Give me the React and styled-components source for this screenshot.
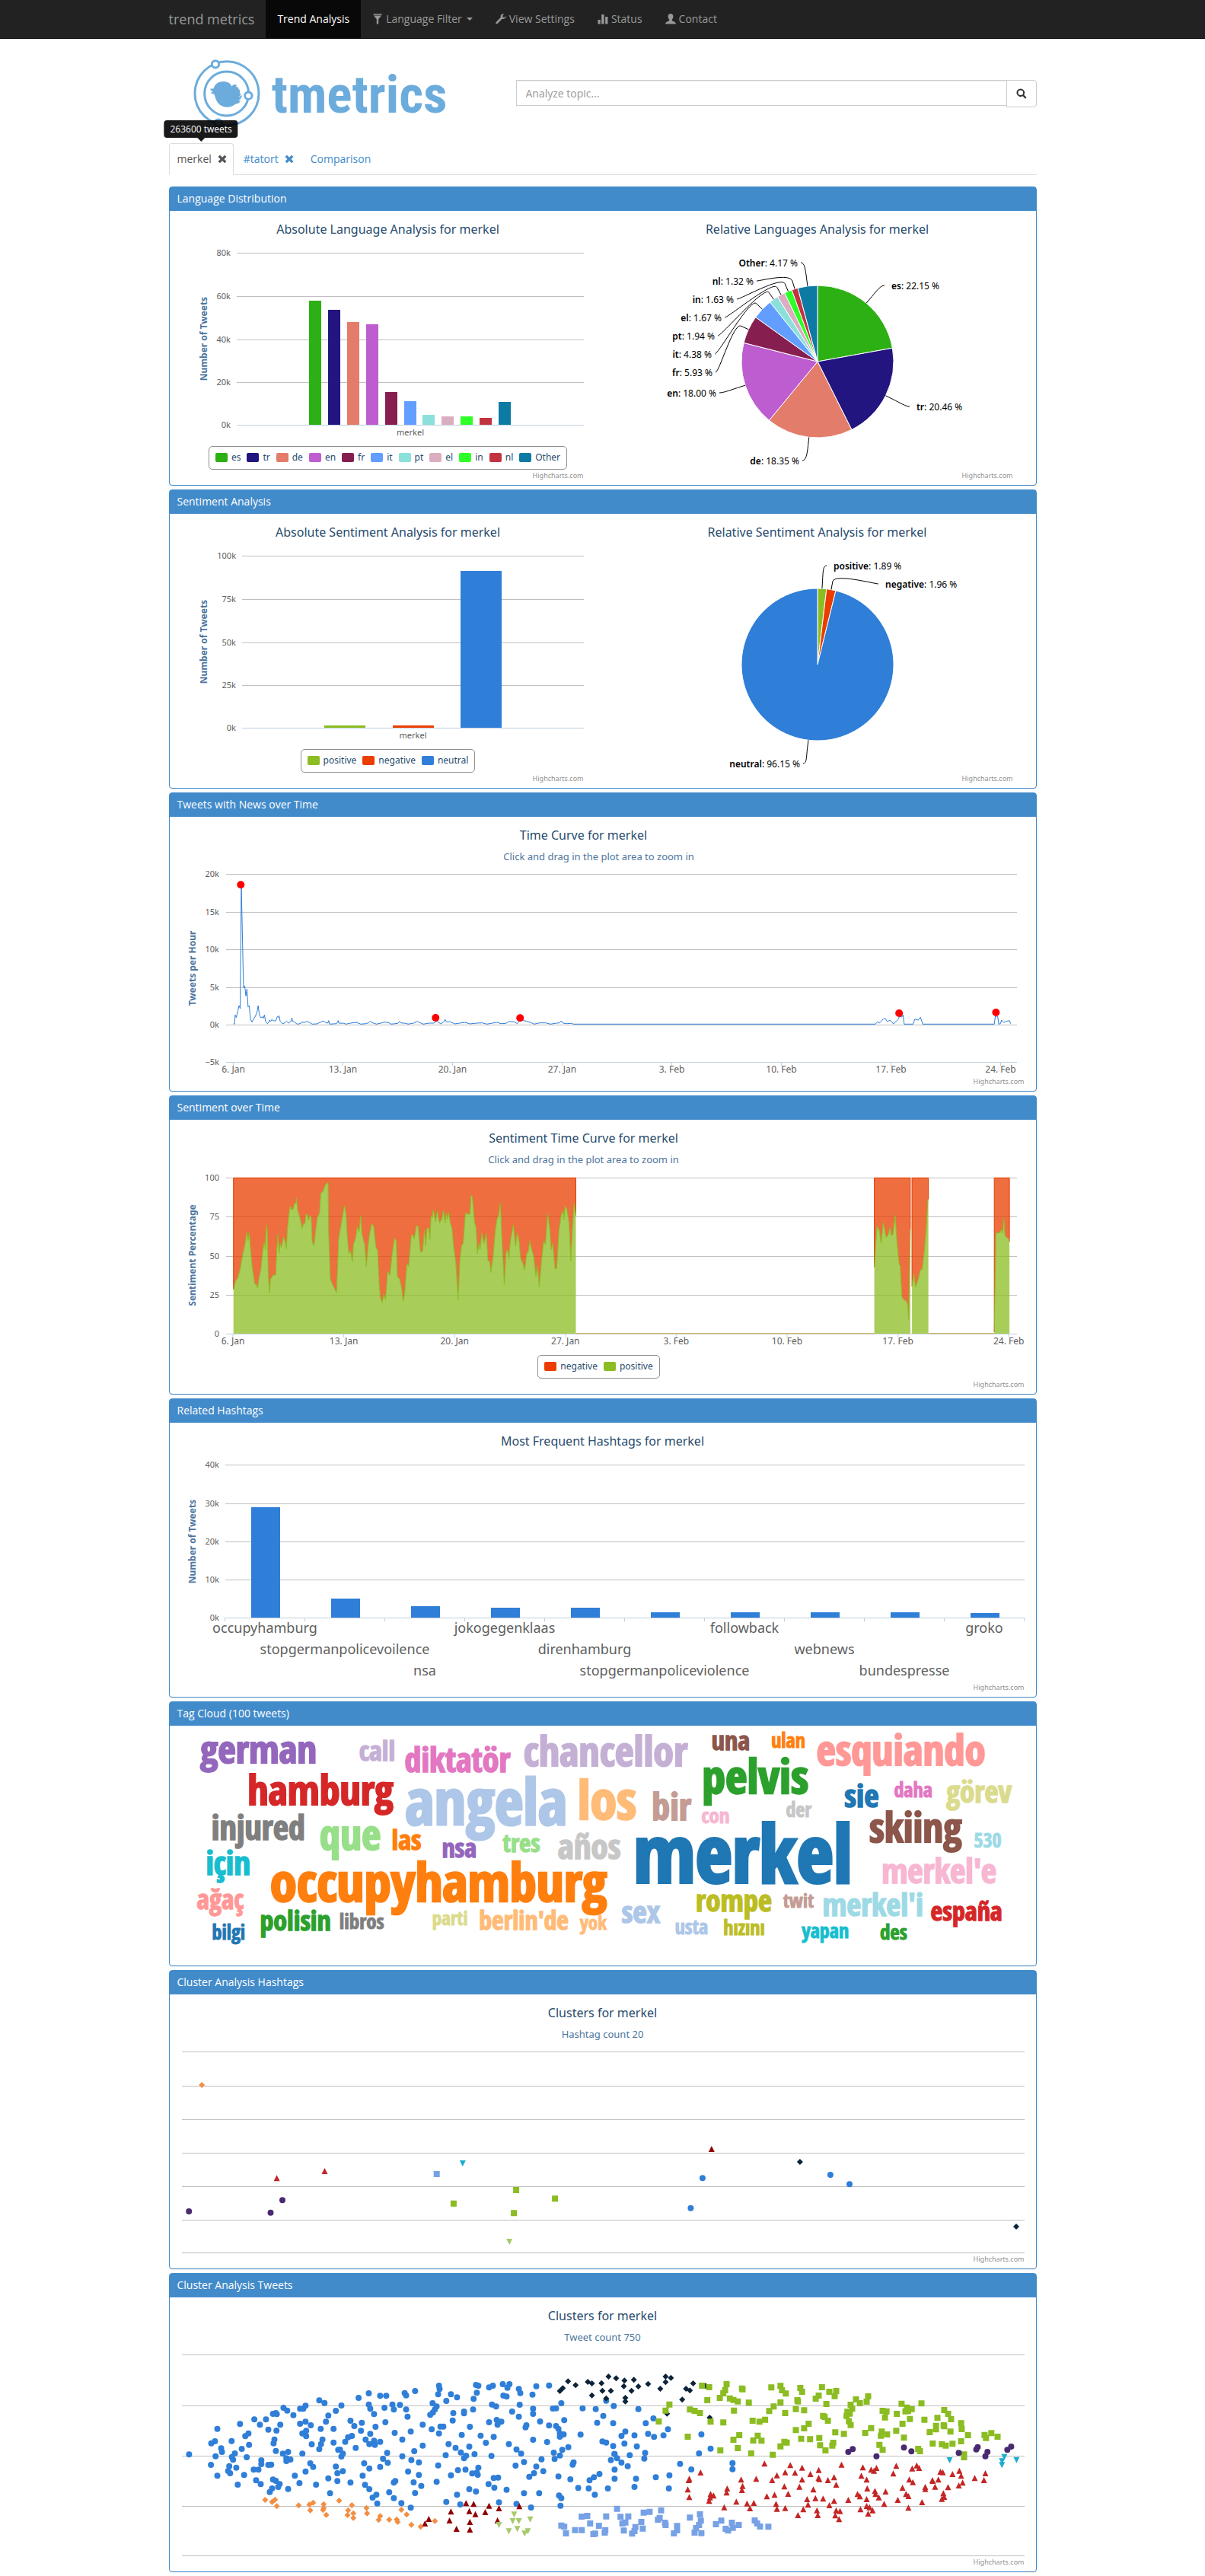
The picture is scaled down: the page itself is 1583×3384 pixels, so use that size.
import React from "react";
import styled, { createGlobalStyle, css } from "styled-components";

/* ---------- theme values ---------- */

const uiFont = `"Open Sans", "Noto Sans", sans-serif`;
const chartFont = `"Noto Sans", "Open Sans", sans-serif`;
const primary = "#428bca";
const logoBlue = "#6cacdc";
const grid = "#c0c0c0";
const axis = "#c0d0e0";

const GlobalStyle = createGlobalStyle`
  * { box-sizing: border-box; }
  body {
    margin: 0;
    background: #fff;
    color: #333;
    font: 14px/20px ${uiFont};
  }
  a { text-decoration: none; }
`;

const Container = styled.div`
  max-width: 1170px;
  margin: 0 auto;
  padding: 0 15px;
`;

/* ---------- navigation bar ---------- */

const Navbar = styled.header`
  background: #222;
  border-bottom: 1px solid #080808;
`;

const NavInner = styled.nav`
  display: flex;
  align-items: stretch;
  min-height: 50px;
`;

const Brand = styled.a`
  padding: 15px 15px 15px 0;
  font-size: 18px;
  line-height: 20px;
  color: #999;
`;

const NavItem = styled.a`
  display: flex;
  align-items: center;
  gap: 4px;
  padding: 15px;
  border: 0;
  background: ${(p) => (p.$active ? "#080808" : "transparent")};
  color: ${(p) => (p.$active ? "#fff" : "#999")};
  font: 14px/20px ${uiFont};
  cursor: pointer;
`;

const Caret = styled.span`
  margin-left: 2px;
  border: 4px solid transparent;
  border-top-color: currentColor;
  border-bottom: 0;
`;

/* ---------- page header ---------- */

const PageHead = styled.div`
  display: grid;
  grid-template-columns: 2fr 3fr;
  height: 137px;
`;

const LogoLink = styled.a`
  padding: 25px 0 0 30px;
`;

const LogoDrawing = styled.svg`
  display: block;
  width: 340px;
  max-width: 100%;
  font-family: "Roboto Condensed", "Open Sans Condensed", sans-serif;
`;

const SearchForm = styled.form`
  display: flex;
  align-items: flex-start;
  padding-top: 54px;
`;

const SearchInput = styled.input`
  flex: 1;
  min-width: 0;
  height: 34px;
  padding: 6px 12px;
  border: 1px solid #ccc;
  border-radius: 0;
  box-shadow: inset 0 1px 1px rgba(0, 0, 0, 0.08);
  font: 14px/20px ${uiFont};
  color: #555;
  &::placeholder { color: #999; opacity: 1; }
`;

const SearchButton = styled.button`
  display: flex;
  align-items: center;
  justify-content: center;
  width: 40px;
  height: 36px;
  margin-left: -1px;
  padding: 0;
  border: 1px solid #ccc;
  border-radius: 0 4px 4px 0;
  background: #fff;
  color: #333;
`;

/* ---------- topic tabs ---------- */

const Tabs = styled.ul`
  display: flex;
  gap: 2px;
  margin: 0 0 15px;
  padding: 0;
  list-style: none;
  border-bottom: 1px solid #ddd;
`;

const Tab = styled.li`
  position: relative;
  display: flex;
  align-items: center;
  gap: 8px;
  height: 42px;
  margin-bottom: -1px;
  padding: 0 8px 0 10px;
  border: 1px solid transparent;
  border-radius: 4px 4px 0 0;
  color: ${primary};
  ${(p) =>
    p.$active &&
    css`
      color: #555;
      background: #fff;
      border-color: #ddd #ddd #fff;
    `}
`;

const TabLink = styled.a`
  color: inherit;
`;

const CloseButton = styled.button`
  display: flex;
  padding: 0;
  border: 0;
  background: none;
  color: inherit;
`;

const Tooltip = styled.span`
  position: absolute;
  left: 50%;
  bottom: 100%;
  transform: translateX(-50%);
  margin-bottom: 8px;
  padding: 3px 8px;
  border-radius: 4px;
  background: rgba(0, 0, 0, 0.9);
  color: #fff;
  font-size: 12px;
  line-height: 17px;
  white-space: nowrap;
  &::after {
    content: "";
    position: absolute;
    left: 50%;
    top: 100%;
    margin-left: -5px;
    border: 5px solid transparent;
    border-top-color: rgba(0, 0, 0, 0.9);
    border-bottom: 0;
  }
`;

/* ---------- panels and chart parts ---------- */

const PanelBox = styled.section`
  margin-bottom: 5px;
  border: 1px solid ${primary};
  border-radius: 4px;
  box-shadow: 0 1px 1px rgba(0, 0, 0, 0.05);
  background: #fff;
`;

const PanelHeading = styled.h2`
  margin: 0;
  padding: 5px 10px 6px;
  background: ${primary};
  color: #fff;
  font-size: 14px;
  font-weight: 400;
  line-height: 20px;
`;

const PanelBody = styled.div`
  padding: 5px;
`;

const Columns = styled.div`
  display: grid;
  grid-template-columns: 1fr 1fr;
  gap: 30px;
  padding: 0 15px;
`;

const ChartBox = styled.figure`
  display: flex;
  flex-direction: column;
  min-height: 350px;
  margin: 0;
  font-family: ${chartFont};
`;

const ChartTitle = styled.h3`
  margin: 0;
  padding: 9px ${(p) => (p.$shift ? "50px" : "0")} 9px 0;
  color: #274b6d;
  font-size: 16px;
  font-weight: 400;
  line-height: 20px;
  text-align: center;
`;

const ChartSubtitle = styled.p`
  margin: 0;
  padding-right: ${(p) => p.$shift || 0}px;
  color: #4d759e;
  font-size: 13px;
  line-height: 18px;
  text-align: center;
`;

const Plot = styled.svg`
  display: block;
  width: 100%;
  font-family: ${chartFont};
  font-size: 11px;
`;

const LegendList = styled.ul`
  display: flex;
  flex-wrap: wrap;
  align-self: center;
  gap: 8px;
  margin: 4px ${(p) => (p.$shift ? "10px" : "0")} 0 0;
  padding: 6px 8px 8px;
  border: 1px solid #909090;
  border-radius: 5px;
  list-style: none;
  color: #274b6d;
  font-size: 12px;
  line-height: 15px;
`;

const LegendItem = styled.li`
  display: flex;
  align-items: center;
  gap: 5px;
`;

const Swatch = styled.span`
  width: 16px;
  height: 12px;
  border-radius: 2px;
  background: ${(p) => p.$color};
`;

const Credits = styled.a`
  margin-top: auto;
  padding-right: 10px;
  color: #909090;
  font-size: 9px;
  line-height: 15px;
  text-align: right;
`;

const Cloud = styled.svg`
  display: block;
  width: 100%;
  font-family: "Open Sans Condensed", "Roboto Condensed", sans-serif;
  font-weight: 800;
`;

/* ---------- icons ---------- */

const Icon = ({ size = 14, children }) => (
  <svg width={size} height={size} viewBox="0 0 14 14" fill="currentColor" aria-hidden="true">
    {children}
  </svg>
);
const FilterIcon = () => (
  <Icon><path d="M1.5 0h11v1.4h-11zM2 2.4h10L8.2 7.2V13l-2.4.9V7.2z" /></Icon>
);
const WrenchIcon = () => (
  <Icon><path d="M13.8 3.2 11.6 5 9.6 4.4 9.2 2.6 11.2.4C9.2-.3 6.900.7 6.600 3c-.1.700 0 1.200.2 1.800L.6 11.200c-.6.6-.5 1.400 0 1.900.6.6 1.500.6 2 0l6.100-6.400c2.800.8 5.400-.9 5.100-3.500z" /></Icon>
);
const StatsIcon = () => (
  <Icon><path d="M.5 8h3.200v5.500H.5zM5.200 1h3.400v12.500H5.200zM10.200 4h3.200v9.500h-3.200z" /></Icon>
);
const UserIcon = () => (
  <Icon><path d="M7 0c2.200 0 3.400 1.500 3.400 3.600 0 1.900-.8 3.300-1.700 4.100v1.200c.5.900 5.300 1.700 5.300 4.300v.300H0v-.3c0-2.600 4.800-3.400 5.300-4.300V7.700C4.400 6.900 3.600 5.500 3.600 3.600 3.600 1.500 4.800 0 7 0z" /></Icon>
);
const RemoveIcon = () => (
  <Icon size={12}><path d="M3.400 1 7 4.500 10.600 1 13.400 3.600 9.900 7l3.500 3.500-2.800 2.700L7 9.700l-3.600 3.500L.6 10.500 4.100 7 .6 3.600z" /></Icon>
);
const SearchIcon = () => (
  <Icon><path fillRule="evenodd" d="M5.800.5a5.300 5.300 0 0 1 4.400 8.200l3.400 3.300-1.700 1.700-3.300-3.400A5.300 5.300 0 1 1 5.800.5zm0 2a3.300 3.300 0 1 0 0 6.600 3.300 3.300 0 0 0 0-6.600z" /></Icon>
);

const Logo = () => (
  <LogoDrawing viewBox="108 30 1020 276" role="img" aria-label="tmetrics">
    <g fill="none" stroke={logoBlue} strokeWidth="9">
      <circle cx="246" cy="170" r="126" />
      <circle cx="245" cy="171" r="87" />
      <g fill="#fff">
        <circle cx="201" cy="55" r="14" />
        <circle cx="331" cy="179" r="14" />
        <circle cx="212" cy="287" r="14" />
      </g>
    </g>
    <path
      fill={logoBlue}
      d="M180 152l14-1c5-19 20-28 40-28 17 1 27 9 32 20 3-9 14-11 19-4-1 2-2 4-3 6 7-2 12 3 10 9 7 3 8 8 4 14 5 2 6 6 4 10l-9 5c5 0 10-2 15-6-1 10-7 18-15 21 4 1 7 1 10 0-3 8-11 13-21 14-10 9-24 13-38 12-25-3-38-20-43-43-2-6-4-9-8-10-4 0-7-1-9-3 3-2 7-3 10-5-5-1-9-4-12-11z"
    />
    <text x="422" y="245" fontSize="208" fontWeight="700" fill={logoBlue}>tmetrics</text>
  </LogoDrawing>
);

/* ---------- generic chart drawing ---------- */

const GridLines = ({ ys, x1, x2, base }) => (
  <g>
    {ys.map((y) => (
      <line key={y} x1={x1} x2={x2} y1={y} y2={y} stroke={y === base ? axis : grid} />
    ))}
  </g>
);

const YLabels = ({ ys, labels, x }) => (
  <g fill="#606060" textAnchor="end">
    {labels.map((t, i) => (
      <text key={t} x={x} y={ys[i] + 3}>{t}</text>
    ))}
  </g>
);

const AxisTitle = ({ y, children }) => (
  <text
    transform={`translate(29 ${y}) rotate(-90)`}
    textAnchor="middle"
    fontSize="12"
    fontWeight="700"
    fill="#4d759e"
  >
    {children}
  </text>
);

const DateAxis = ({ ticks, y }) => (
  <g>
    {ticks.map(([x, label]) => (
      <g key={label}>
        <line x1={x} x2={x} y1={y} y2={y + 5} stroke={axis} />
        <text x={x} y={y + 14} textAnchor="middle" fill="#606060" fontSize="12">{label}</text>
      </g>
    ))}
  </g>
);

const Legend = ({ items, shift }) => (
  <LegendList $shift={shift}>
    {items.map(([name, color]) => (
      <LegendItem key={name}>
        <Swatch $color={color} />
        {name}
      </LegendItem>
    ))}
  </LegendList>
);

const Chart = ({ title, subtitle, shift, subShift, legend, children }) => (
  <ChartBox>
    <ChartTitle $shift={shift}>{title}</ChartTitle>
    {subtitle && <ChartSubtitle $shift={subShift}>{subtitle}</ChartSubtitle>}
    {children}
    {legend && <Legend items={legend} shift={shift} />}
    <Credits href="#">Highcharts.com</Credits>
  </ChartBox>
);

/* Column chart used by the two half-width panels. */
const columnYs = [50.5, 107.5, 164.5, 220.5, 276.5];

const ColumnPlot = ({ labels, left, bars }) => (
  <Plot viewBox="0 38 534 262">
    <GridLines ys={columnYs} x1={left} x2={524} base={276.5} />
    <YLabels ys={columnYs} labels={labels} x={left - 8} />
    <AxisTitle y={163}>Number of Tweets</AxisTitle>
    {bars.map(([x, y, w, color]) => (
      <rect key={x} x={x} y={y} width={w} height={276 - y} fill={color} />
    ))}
    <text x={(left + 524) / 2} y="290" textAnchor="middle" fill="#606060">merkel</text>
  </Plot>
);

/* Pie with soft connectors that bend out of the slice towards the label. */
const PiePlot = ({ slices }) => {
  const cx = 267, cy = 193, r = 100;
  const total = slices.reduce((s, d) => s + d.value, 0);
  let turn = 0;
  const at = (a, dist) => [cx + Math.sin(a) * dist, cy - Math.cos(a) * dist];
  return (
    <Plot viewBox="0 38 534 295">
      {slices.map(({ name, value, color, anchor }) => {
        const a0 = (turn / total) * 2 * Math.PI;
        const a1 = ((turn + value) / total) * 2 * Math.PI;
        turn += value;
        const mid = (a0 + a1) / 2;
        const rightSide = mid < Math.PI && name !== "neutral";
        const [ax, ay] = anchor;
        const side = rightSide ? -5 : 5;
        return (
          <g key={name}>
            <path
              d={`M${cx} ${cy}L${at(a0, r)}A${r} ${r} 0 ${a1 - a0 > Math.PI ? 1 : 0} 1 ${at(a1, r)}Z`}
              fill={color}
              stroke="#fff"
            />
            <path
              d={`M${ax} ${ay}C${ax + side} ${ay} ${at(mid, r + 22)} ${at(mid, r + 11)}L${at(mid, r)}`}
              fill="none"
              stroke="#000"
            />
            <text
              x={rightSide ? ax + 9 : ax - 4}
              y={ay + 5}
              fontSize="12"
              textAnchor={rightSide ? "start" : "end"}
            >
              <tspan fontWeight="600">{name}</tspan>: {value.toFixed(2)} %
            </text>
          </g>
        );
      })}
    </Plot>
  );
};

/* ---------- data ---------- */

const languages = [
  ["es", "#2cb014", 22.15, 113, [355, 93]],
  ["tr", "#231580", 20.46, 125, [388, 252]],
  ["de", "#e37c6a", 18.35, 141, [247, 323]],
  ["en", "#bd5dd0", 18.0, 144, [138, 234]],
  ["fr", "#861f4f", 5.93, 233, [133, 207]],
  ["it", "#629eff", 4.38, 245, [132, 183]],
  ["pt", "#8be0db", 1.94, 263, [136, 159]],
  ["el", "#dbadc0", 1.67, 265, [145, 135]],
  ["in", "#2dff27", 1.63, 265, [161, 111]],
  ["nl", "#c23340", 1.32, 267, [187, 87]],
  ["Other", "#0d7aa4", 4.17, 246, [245, 63]],
];
const languageBars = languages.map(([, c, , y], i) => [163 + Math.round(i * 24.9), y, 16, c]);

const sentiments = [
  { name: "positive", value: 1.89, color: "#8bbc21", anchor: [279, 63] },
  { name: "negative", value: 1.96, color: "#eb3d00", anchor: [347, 87] },
  { name: "neutral", value: 96.15, color: "#2f7ed8", anchor: [248, 323] },
];

/* Wide charts keep their samples on a 1568-unit horizontal and a 3x vertical scale. */
const wideX = (u) => u / 1.3517 - 17.5;
const parse = (s) => s.trim().split(/\s+/).map((p) => p.split(",").map(Number));
const toPath = (pts, dy) =>
  pts.map(([u, v], i) => `${i ? "L" : "M"}${wideX(u).toFixed(1)} ${(v / 3 - dy).toFixed(1)}`).join("");

const tweetCurve = parse(`130,915 132,915 133,880 135,890 138,862 140,843 142,855 144,367 147,690 148,772 150,765 152,805
154,778 156,848 158,843 160,895 163,908 166,895 169,885 172,868 174,843 176,880 179,891 182,887 183,893 185,880 187,905
190,914 193,908 194,900 196,906 198,898 201,903 205,903 208,886 210,890 211,883 213,905 217,914 221,911 224,904 228,912
232,905 234,892 235,906 238,907 243,916 248,914 252,908 256,910 259,906 264,908 270,916 278,915 283,910 287,906 291,904
294,911 298,911 299,902 301,916 313,914 316,902 317,912 326,913 330,916 338,912 348,909 356,916 365,914 370,911 373,904
376,910 384,916 392,912 398,908 405,910 410,916 422,913 425,905 427,911 436,913 440,916 450,912 456,905 460,909 467,916
478,912 486,912 490,905 494,908 498,915 503,908 506,898 508,907 515,907 523,915 532,912 541,909 550,915 562,912 572,911
580,916 590,912 598,909 605,914 614,913 619,906 628,907 634,914 640,898 644,902 650,904 658,910 664,916 674,911 684,911
693,916 704,912 709,911 712,903 715,912 722,914 730,913 734,916 1270,916 1274,906 1277,912 1280,905 1284,896 1288,895
1291,906 1296,900 1302,915 1307,905 1310,898 1313,885 1317,888 1319,880 1321,916 1337,916 1340,896 1346,900 1350,889
1354,916 1481,916 1483,885 1487,885 1489,916 1492,914 1494,900 1498,910 1502,905 1508,902 1510,914`);

const newsMarkers = parse("143,367 489,891 639,892 1312,873 1484,870");

const positiveRuns = [
  `130,792 134,758 138,745 142,710 146,660 150,620 154,565 156,600 158,568 161,650 164,715 168,772 170,770 173,786 175,750
179,710 182,640 185,605 187,635 188,537 190,560 192,740 194,806 196,750 201,735 205,735 207,640 209,574 211,650 213,610
215,625 219,585 222,605 224,632 226,550 229,490 231,462 233,478 236,475 239,450 241,455 242,430 244,480 248,510 252,550
255,530 257,535 259,495 261,495 263,520 266,500 268,510 270,605 273,620 276,560 279,510 283,490 285,415 289,405 293,382
296,372 298,370 299,560 302,750 305,768 309,785 313,805 317,590 321,540 325,490 327,460 330,495 332,580 335,650 338,640
341,684 343,615 347,590 350,545 353,565 356,500 358,570 360,590 363,615 366,700 369,620 372,570 376,532 379,545 383,625
386,640 389,780 391,825 394,845 397,810 400,832 404,720 408,735 412,650 416,590 419,600 421,740 425,750 429,790 431,838
434,810 438,690 441,700 446,575 449,580 451,592 455,540 458,545 462,645 466,640 469,555 471,620 474,550 477,550 479,595
481,500 483,510 485,477 489,525 492,482 496,530 500,515 503,480 506,530 508,490 510,515 512,487 515,530 518,550 521,620
525,690 529,832 532,680 535,620 538,610 542,490 546,495 550,495 552,420 554,425 558,525 561,550 563,650 566,610 568,635
571,570 575,612 579,570 582,680 585,680 587,725 591,665 595,560 598,515 601,500 604,450 607,610 611,772 614,650 617,635
619,670 622,600 627,537 631,620 634,570 637,600 640,670 644,690 647,716 651,650 654,640 656,600 659,630 663,660 667,740
670,700 673,782 677,680 681,600 684,615 688,493 692,560 694,635 697,610 701,710 704,710 708,560 712,500 715,480 717,515
719,463 722,475 726,530 729,680 732,550 735,450 738,500`,
  `1268,705 1271,600 1273,540 1277,560 1280,610 1284,527 1289,587 1293,575 1296,545 1298,580 1301,575 1305,500 1308,600
1312,690 1314,700 1317,820 1321,835 1324,835 1327,850 1329,910 1332,555`,
  `1335,780 1338,730 1341,782 1345,760 1350,715 1353,712 1357,640 1361,530 1363,437 1364,437`,
  `1481,960 1484,570 1491,568 1494,555 1496,570 1498,509 1500,580 1503,588 1506,590 1508,603`,
].map(parse);

const hashtags = [
  ["occupyhamburg", 106], ["stopgermanpolicevoilence", 226], ["nsa", 236], ["jokogegenklaas", 238],
  ["direnhamburg", 238], ["stopgermanpoliceviolence", 244], ["followback", 244], ["webnews", 244],
  ["bundespresse", 244], ["groko", 245],
];

const cloudWords = [
  ["german", 71, 258, 51, "#9467bd"], ["call", 353, 248, 36, "#c5b0d5"], ["diktatör", 434, 293, 44, "#e377c2"],
  ["chancellor", 645, 270, 54, "#c5b0d5"], ["una", 979, 207, 34, "#8c564b"], ["ulan", 1085, 198, 26, "#ff7f0e"],
  ["esquiando", 1165, 267, 55, "#ff9896"], ["hamburg", 155, 423, 54, "#d62728"], ["angela", 435, 502, 82, "#aec7e8"],
  ["los", 741, 480, 70, "#ffbb78"], ["bir", 873, 482, 48, "#c49c94"], ["pelvis", 962, 377, 62, "#2ca02c"],
  ["sie", 1215, 433, 42, "#1f77b4"], ["daha", 1303, 392, 26, "#e377c2"], ["görev", 1396, 413, 39, "#dbdb8d"],
  ["con", 961, 494, 27, "#f7b6d2"], ["der", 1111, 470, 26, "#c7c7c7"], ["injured", 91, 561, 44, "#7f7f7f"],
  ["que", 283, 601, 55, "#98df8a"], ["las", 411, 600, 36, "#ff7f0e"], ["nsa", 500, 629, 34, "#9467bd"],
  ["tres", 608, 608, 33, "#98df8a"], ["años", 706, 635, 45, "#c7c7c7"], ["merkel", 840, 730, 105, "#1f77b4"],
  ["skiing", 1259, 570, 53, "#8c564b"], ["530", 1445, 591, 26, "#9edae5"], ["için", 81, 699, 43, "#17becf"],
  ["occupyhamburg", 195, 804, 71, "#ff7f0e"], ["merkel'e", 1281, 731, 44, "#f7b6d2"], ["ağaç", 65, 834, 35, "#ff9896"],
  ["rompe", 951, 842, 39, "#bcbd22"], ["twit", 1106, 828, 25, "#c49c94"], ["merkel'i", 1176, 861, 41, "#9edae5"],
  ["españa", 1368, 878, 34, "#d62728"], ["polisin", 177, 918, 36, "#2ca02c"], ["libros", 318, 911, 27, "#7f7f7f"],
  ["parti", 483, 897, 25, "#dbdb8d"], ["berlin'de", 566, 916, 34, "#ffbb78"], ["yok", 745, 914, 25, "#ffbb78"],
  ["sex", 819, 887, 40, "#aec7e8"], ["usta", 914, 933, 26, "#aec7e8"], ["hızını", 1000, 936, 26, "#bcbd22"],
  ["yapan", 1139, 948, 26, "#17becf"], ["des", 1278, 953, 27, "#2ca02c"], ["bilgi", 92, 953, 26, "#1f77b4"],
];

const series = {
  blue: ["circle", "#2f7ed8"],
  navy: ["diamond", "#0d233a"],
  green: ["square", "#8bbc21"],
  maroon: ["up", "#910000"],
  cyan: ["down", "#1aadce"],
  purple: ["circle", "#492970"],
  orange: ["diamond", "#f28f43"],
  sky: ["square", "#77a1e5"],
  red: ["up", "#c42525"],
  lime: ["down", "#a6c96a"],
};

const hashtagClusters = {
  blue: "963,844 942,962 1190,831 1224,868",
  navy: "1136,780 1520,1035",
  green: "632,891 521,944 701,925 628,982",
  maroon: "979,729",
  cyan: "537,786",
  purple: "51,975 196,980 217,931",
  orange: "74,477",
  sky: "491,828",
  red: "207,844 292,816",
  lime: "620,1095",
};

/* Tweet clusters, western part of the map. */
const tweetsWest = {
  blue: `99,733 174,774 196,632 188,681 175,689 190,740 196,817 209,709 212,723 245,680 256,729 246,743 250,754 237,779
261,785 233,798 240,807 274,613 323,595 303,650 292,661 305,695 280,711 297,744 266,852 288,814 342,616 363,595 321,793
337,793 347,756 347,771 371,774 381,773 329,835 345,850 371,635 399,639 412,616 387,573 397,570 400,574 423,549 436,560
457,578 392,674 389,689 397,719 421,730 439,723 433,748 433,759 447,753 387,832 397,837 410,850 405,861 384,867 376,881
439,869 462,817 478,846 480,553 491,553 499,541 480,612 499,604 517,618 501,640 488,650 501,661 520,693 488,730 515,768
525,782 499,800 535,852 546,520 564,530 577,580 569,604 551,632 557,674 552,692 546,712 577,827 583,886 622,540 603,561
595,632 595,686 611,715 617,714 627,730 622,741 603,781 608,807 627,799 608,838 653,600 666,621 645,665 658,660 635,683
671,707 653,844 681,510 716,492 755,502 776,502 716,536 721,553 734,574 692,608 739,624 689,640 721,652 705,674 734,679
718,692 737,695 755,683 700,768 718,788 695,817 703,853 718,870 742,892 729,903 745,926 779,727 765,750 781,766 755,782
786,882 802,905 828,925 860,943 770,549 797,536 802,556 823,538 844,556 849,584 773,606 805,648 831,674 831,740 862,755
888,764 872,720 851,800 888,814 870,843 896,857 807,838 802,844 875,885 839,491 844,500 875,483 860,643 901,616 901,698
957,462 959,475 954,496 998,496 1019,508 982,522 935,531 949,544 943,556 936,568 927,577 1006,570 1004,599 962,623
972,623 932,634 957,650 990,692 1014,707 980,736 954,776 1022,795 998,815 949,841 1019,892 982,920 1030,930 1084,459
1092,462 1087,490 1076,514 1129,469 1142,462 1176,456 1199,456 1192,470 1178,501 1189,505 1231,475 1236,491 1291,464
1278,497 1335,461 1074,556 1043,564 1043,571 1063,624 1035,656 1100,659 1139,536 1153,544 1208,564 1234,537 1280,553
1280,573 1231,584 1129,606 1155,597 1171,604 1158,616 1257,618 1254,626 1304,603 1335,619 1359,621 1145,664 1118,687
1061,702 1032,725 1050,738 1043,748 1079,732 1137,739 1197,692 1223,713 1239,730 1280,675 1328,684 1092,785 1048,793
1071,808 1087,805 1090,813 1145,826 1160,824 1127,850 1147,864 1061,870 1084,879 1189,872 1220,777 1249,763 1309,752
1291,781 1283,807 1315,799 1267,821 1249,886 1301,886 1163,922 1223,928 1273,942 1377,531 1348,552 1359,551 1387,598
1367,632 1372,650 1385,654 1372,663 1443,655 1401,704 1380,715 1351,726 1372,737 1354,751 1419,764 1416,773 1367,820
1408,831 1369,895 1377,905 1374,935 1435,865 1450,551 1495,554 1531,521 1557,542 1521,581 1500,608 1555,610 1518,682
1531,686 1555,700 1559,731 1547,755 1560,793 1560,829 1508,810 1489,823 1474,835 1471,867 1492,892 1537,867`,
  navy: `1372,483 1382,472 1400,445 1426,460 1468,447 1482,453 1515,452 1539,426 1518,482 1547,482 1482,500 1531,512 1565,433`,
  maroon: `909,1005 922,987 998,958 993,993 1017,1026 1050,925 1076,928 1061,956 1082,968 1063,999 1063,1029 1129,935
1116,960 1163,945 1158,993 1233,937`,
  orange: `360,912 384,920 394,911 400,937 475,934 512,931 525,923 515,953 561,929 561,944 559,952 570,971 614,915 658,933
645,953 663,965 643,972 663,983 708,944 710,965 755,976 750,991 786,990 812,989 815,999 828,951 846,970 862,1010 894,1018
943,995`,
  lime: `1215,970 1210,996 1231,996 1270,989 1163,1011 1226,1027 1197,1036 1262,1036 1251,1045`,
  sky: `1377,1013 1387,1018 1393,1044 1424,1031 1447,1031 1447,978 1466,975 1476,1005 1506,1014 1531,977 1528,1031
1526,1041 1487,1047 1493,1045`,
};

/* Tweet clusters, eastern part of the map. */
const tweetsEast = {
  blue: `175,554 131,643 118,660 162,658 128,690 170,701 146,736 95,731 103,748 118,765 139,779 198,727 195,749 167,829
162,861 200,610 226,591 208,652 228,664 260,658 275,634 234,823 280,815 278,867 316,770 354,792 380,729 388,654 419,710
493,767 493,791`,
  navy: `128,442 160,439 126,464 152,482 175,465 131,510 131,524 208,455 249,474 267,426 285,431 267,448 323,517 336,474
349,481 360,453 402,463 272,572 416,588`,
  purple: `884,723 899,712 979,740 1072,706 1097,721 1257,727 1321,704 1316,713 1354,723 1347,740 1421,715 1434,702`,
  green: `390,462 414,468 473,456 468,480 462,492 450,510 408,519 280,536 267,560 244,603 349,556 365,561 383,570 419,604
462,607 342,663 484,512 496,518 511,524 548,529 525,473 527,476 624,469 655,463 660,480 673,493 655,528 632,544 617,562
671,570 498,560 561,600 584,604 603,596 516,657 496,675 452,717 511,708 578,659 563,678 591,679 556,729 629,734 655,701
668,683 676,686 722,471 728,486 712,519 714,524 707,554 735,559 750,612 735,630 707,637 725,671 755,673 786,668 789,697
795,468 784,501 774,513 820,486 843,483 838,503 810,534 799,581 804,585 815,600 840,646 869,652 833,687 830,698 807,717
910,516 923,531 951,504 946,525 892,537 897,553 881,565 889,572 878,581 886,602 892,617 941,648 961,629 1064,533 1131,532
1082,548 1098,554 1077,563 1086,562 1000,561 1013,563 1008,587 1048,573 1092,593 1067,612 1046,640 997,643 1015,654
994,659 1072,667 989,695 1000,715 1120,711 1126,720 1141,596 1185,589 1208,558 1221,573 1231,594 1180,620 1180,634
1206,618 1208,622 1159,645 1229,643 1169,690 1200,693 1213,698 1236,691 1265,681 1265,610 1267,633 1288,657 1344,656
1349,668 1367,649 1388,663 1275,733 1275,744`,
  red: `601,769 688,775 728,785 784,794 861,773 933,784 979,786 961,793 971,797 1046,778 1115,776 1123,786 1100,788
1347,807 385,804 347,829 345,834 342,871 347,901 522,832 573,829 527,857 525,873 475,867 473,883 419,889 429,895 417,902
414,916 506,919 465,941 542,926 565,924 552,945 643,815 671,803 704,805 627,834 668,859 609,898 635,892 681,888 640,928
643,947 671,944 756,810 728,832 784,825 786,830 815,834 836,823 843,852 719,860 766,871 745,909 748,931 773,905 799,907
836,916 820,933 732,949 714,972 778,953 781,972 843,953 856,956 840,973 853,988 928,817 946,832 948,867 915,889 923,898
884,912 946,909 974,877 976,889 987,902 1010,879 946,936 956,941 925,949 966,953 951,966 1005,928 1036,808 1090,832
1102,842 1067,864 1079,889 1087,897 1051,912 1133,921 1087,943 1195,801 1203,803 1236,810 1259,797 1265,817 1168,834
1188,832 1144,861 1144,869 1177,860 1221,862 1205,886 1208,900 1200,908 1257,855 1270,844 1311,826 1342,834 1169,837`,
  cyan: "1226,756 1411,743 1403,760 1403,775 1452,755",
  sky: `103,947 115,979 141,977 193,962 213,959 252,953 131,1001 121,1005 185,999 126,1033 165,1019 162,1035 154,1045
190,1025 247,983 241,990 265,1002 267,1011 306,1015 306,1032 295,1044 349,982 383,969 386,994 380,1011 370,1023 365,1041
388,1043 437,1008 455,994 491,1002 494,1022 470,1026 478,1033 514,1011 568,993 576,1005 586,1017 614,1018`,
};

const shapes = {
  circle: (x, y) => `M${x - 4} ${y}a4 4 0 1 0 8 0a4 4 0 1 0-8 0z`,
  square: (x, y) => `M${x - 4} ${y - 4}h8v8h-8z`,
  diamond: (x, y) => `M${x} ${y - 4}l4 4-4 4-4-4z`,
  up: (x, y) => `M${x} ${y - 4}l4 8h-8z`,
  down: (x, y) => `M${x - 4} ${y - 4}h8l-4 8z`,
};

const Markers = ({ data, scale, dx, dy }) =>
  Object.keys(series)
    .filter((k) => data[k])
    .map((k) => {
      const [shape, color] = series[k];
      const d = parse(data[k])
        .map(([u, v]) => shapes[shape](+(u / scale + dx).toFixed(1), +(v / 3 - dy).toFixed(1)))
        .join("");
      return <path key={k} d={d} fill={color} />;
    });

/* ---------- chart sections ---------- */

const timeYs = [70.5, 120.5, 169.5, 219.5, 268.5, 317.5];
const weeks = ["6. Jan", "13. Jan", "20. Jan", "27. Jan", "3. Feb", "10. Feb", "17. Feb", "24. Feb"];

const TimeCurve = () => (
  <Plot viewBox="0 56 1128 279">
    <GridLines ys={timeYs} x1={69} x2={1108} base={317.5} />
    <YLabels ys={timeYs} labels={["20k", "15k", "10k", "5k", "0k", "−5k"]} x={60} />
    <AxisTitle y={194}>Tweets per Hour</AxisTitle>
    <DateAxis ticks={weeks.map((w, i) => [78.5 + i * 144, w])} y={317} />
    <path d={toPath(tweetCurve, 38)} fill="none" stroke="#2f7ed8" strokeLinejoin="round" />
    {newsMarkers.map(([u, v]) => (
      <circle key={u} cx={wideX(u)} cy={v / 3 - 38} r="5" fill="#f00" />
    ))}
  </Plot>
);

const percentYs = [71.5, 122.5, 174.5, 225.5, 276.5];

const SentimentCurve = () => (
  <Plot viewBox="0 56 1128 244">
    <GridLines ys={percentYs} x1={69} x2={1108} base={276.5} />
    <YLabels ys={percentYs} labels={["100", "75", "50", "25", "0"]} x={60} />
    <AxisTitle y={173}>Sentiment Percentage</AxisTitle>
    <DateAxis ticks={weeks.map((w, i) => [78 + i * 145.6, w])} y={276} />
    {positiveRuns.map((run) => {
      const first = run[0][0];
      const last = run[run.length - 1][0];
      const back = [...run].reverse();
      return (
        <g key={first} fillOpacity="0.75">
          <path d={toPath([[first, 352], [last, 352], ...back], 46) + "Z"} fill="#e83d00" />
          <path d={toPath([[first, 966], ...run, [last, 966]], 46) + "Z"} fill="#8bbc21" />
          <path d={toPath([run[0], [first, 352], [last, 352], run[run.length - 1]], 46)} fill="none" stroke="#e83d00" />
          <path d={toPath(run, 46)} fill="none" stroke="#8bbc21" />
        </g>
      );
    })}
    <path d={toPath([[738, 965], [1268, 965]], 46) + toPath([[1364, 965], [1481, 965]], 46)} stroke="#c9a24a" />
  </Plot>
);

const hashtagYs = [50.5, 101.5, 151.5, 201.5, 251.5];

const HashtagColumns = () => (
  <Plot viewBox="0 38 1128 297">
    <GridLines ys={hashtagYs} x1={68} x2={1118} base={251.5} />
    <YLabels ys={hashtagYs} labels={["40k", "30k", "20k", "10k", "0k"]} x={60} />
    <AxisTitle y={151}>Number of Tweets</AxisTitle>
    {[...Array(11).keys()].map((i) => (
      <line key={i} x1={67.5 + i * 105} x2={67.5 + i * 105} y1="251" y2="256" stroke={axis} />
    ))}
    {hashtags.map(([name, top], i) => (
      <g key={name}>
        <rect x={102 + i * 105} y={top} width="38" height={251 - top} fill="#2f7ed8" />
        <text x={120 + i * 105} y={271 + (i % 3) * 28} textAnchor="middle" fontSize="18" fill="#606060">
          {name}
        </text>
      </g>
    ))}
  </Plot>
);

const TagCloud = () => (
  <Cloud viewBox="0 0 1128 305">
    {cloudWords.map(([word, u, v, size, color]) => (
      <text
        key={word}
        x={wideX(u)}
        y={v / 3 - 42}
        fontSize={size}
        fill={color}
        stroke={color}
        strokeWidth={size / 26}
      >
        {word}
      </text>
    ))}
  </Cloud>
);

const Panel = ({ title, children }) => (
  <PanelBox>
    <PanelHeading>{title}</PanelHeading>
    <PanelBody>{children}</PanelBody>
  </PanelBox>
);

export default function App() {
  return (
    <>
      <GlobalStyle />
      <Navbar>
        <Container>
          <NavInner>
            <Brand href="#">trend metrics</Brand>
            <NavItem href="#" $active>Trend Analysis</NavItem>
            <NavItem as="button" type="button">
              <FilterIcon />Language Filter<Caret />
            </NavItem>
            <NavItem href="#"><WrenchIcon />View Settings</NavItem>
            <NavItem href="#"><StatsIcon />Status</NavItem>
            <NavItem href="#"><UserIcon />Contact</NavItem>
          </NavInner>
        </Container>
      </Navbar>

      <Container>
        <PageHead>
          <LogoLink href="#"><Logo /></LogoLink>
          <SearchForm>
            <SearchInput type="text" placeholder="Analyze topic..." aria-label="Analyze topic" />
            <SearchButton type="button" aria-label="Search"><SearchIcon /></SearchButton>
          </SearchForm>
        </PageHead>

        <Tabs>
          <Tab $active>
            <TabLink href="#">merkel</TabLink>
            <CloseButton type="button" aria-label="Close merkel"><RemoveIcon /></CloseButton>
            <Tooltip role="tooltip">263600 tweets</Tooltip>
          </Tab>
          <Tab>
            <TabLink href="#">#tatort</TabLink>
            <CloseButton type="button" aria-label="Close #tatort"><RemoveIcon /></CloseButton>
          </Tab>
          <Tab>
            <TabLink href="#">Comparison</TabLink>
          </Tab>
        </Tabs>

        <Panel title="Language Distribution">
          <Columns>
            <Chart
              title="Absolute Language Analysis for merkel"
              legend={languages.map(([name, color]) => [name, color])}
            >
              <ColumnPlot labels={["80k", "60k", "40k", "20k", "0k"]} left={68} bars={languageBars} />
            </Chart>
            <Chart title="Relative Languages Analysis for merkel">
              <PiePlot
                slices={languages.map(([name, color, value, , anchor]) => ({ name, color, value, anchor }))}
              />
            </Chart>
          </Columns>
        </Panel>

        <Panel title="Sentiment Analysis">
          <Columns>
            <Chart
              title="Absolute Sentiment Analysis for merkel"
              legend={sentiments.map((s) => [s.name, s.color])}
            >
              <ColumnPlot
                labels={["100k", "75k", "50k", "25k", "0k"]}
                left={75}
                bars={[
                  [183, 273, 54, "#8bbc21"],
                  [273, 273, 54, "#eb3d00"],
                  [362, 70, 54, "#2f7ed8"],
                ]}
              />
            </Chart>
            <Chart title="Relative Sentiment Analysis for merkel">
              <PiePlot slices={sentiments} />
            </Chart>
          </Columns>
        </Panel>

        <Panel title="Tweets with News over Time">
          <Chart
            title="Time Curve for merkel"
            subtitle="Click and drag in the plot area to zoom in"
            shift
            subShift={10}
          >
            <TimeCurve />
          </Chart>
        </Panel>

        <Panel title="Sentiment over Time">
          <Chart
            title="Sentiment Time Curve for merkel"
            subtitle="Click and drag in the plot area to zoom in"
            shift
            subShift={50}
            legend={[["negative", "#eb3d00"], ["positive", "#8bbc21"]]}
          >
            <SentimentCurve />
          </Chart>
        </Panel>

        <Panel title="Related Hashtags">
          <Chart title="Most Frequent Hashtags for merkel">
            <HashtagColumns />
          </Chart>
        </Panel>

        <Panel title="Tag Cloud (100 tweets)">
          <TagCloud />
        </Panel>

        <Panel title="Cluster Analysis Hashtags">
          <Chart title="Clusters for merkel" subtitle="Hashtag count 20">
            <Plot viewBox="0 56 1128 279">
              <GridLines ys={[70.5, 115.5, 159.5, 203.5, 247.5, 291.5, 334.5]} x1={11} x2={1118} />
              <Markers data={hashtagClusters} scale={1.3517} dx={-17.5} dy={45} />
            </Plot>
          </Chart>
        </Panel>

        <Panel title="Cluster Analysis Tweets">
          <Chart title="Clusters for merkel" subtitle="Tweet count 750">
            <Plot viewBox="0 56 1128 279">
              <GridLines ys={[70.5, 137.5, 203.5, 269.5, 334.5]} x1={11} x2={1118} />
              <Markers data={tweetsWest} scale={2.6133} dx={-17.5} dy={43} />
              <Markers data={tweetsEast} scale={2.5705} dx={542.5} dy={43} />
            </Plot>
          </Chart>
        </Panel>
      </Container>
    </>
  );
}
